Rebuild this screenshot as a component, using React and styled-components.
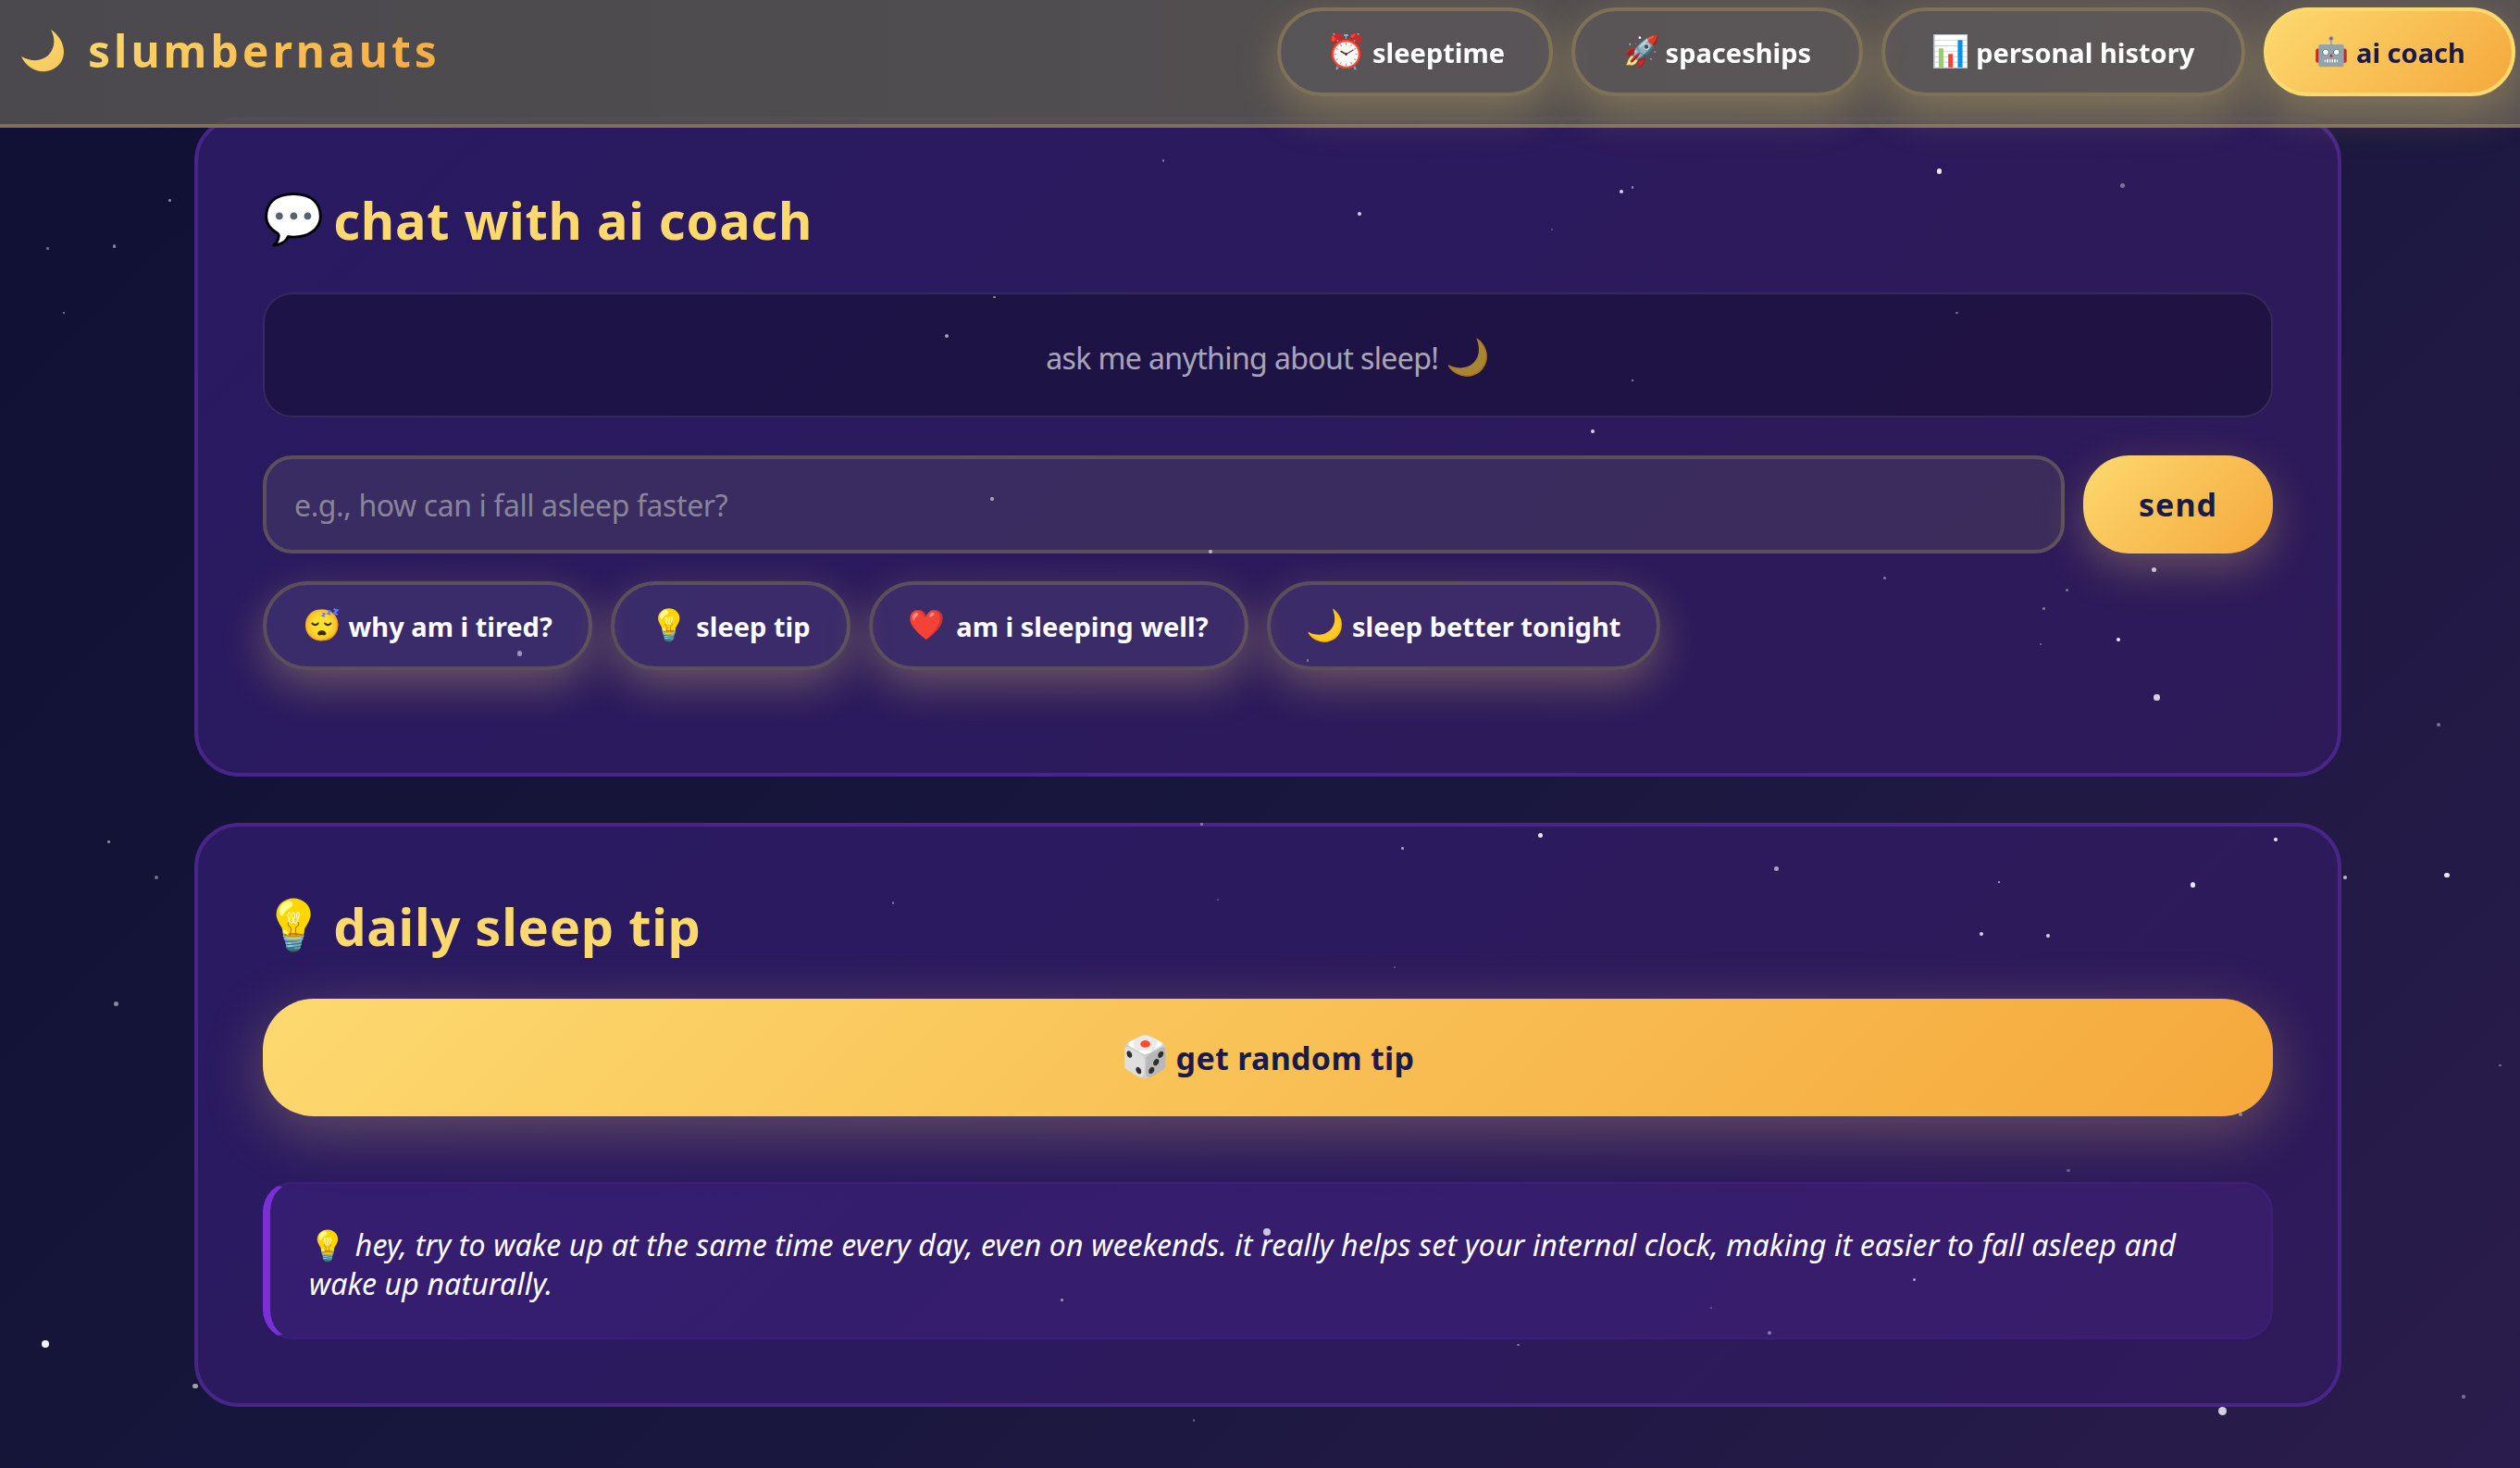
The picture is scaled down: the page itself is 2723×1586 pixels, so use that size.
import * as React from 'react'
import styled, { createGlobalStyle } from 'styled-components'

const GlobalStyle = createGlobalStyle`
  html, body {
    margin: 0;
    height: 100%;
    overflow: hidden;
  }
  body {
    background: linear-gradient(135deg, #0f1033 0%, #17163c 50%, #2a1c4c 100%);
    font-family: 'Noto Sans', 'Noto Color Emoji', sans-serif;
    line-height: 1.6;
    color: #fff;
  }
  * { box-sizing: border-box; }
`

const Stars = styled.div`
  position: fixed;
  inset: 0;
  z-index: 5;
  pointer-events: none;
`

const Star = styled.span.attrs((p) => ({
  style: { left: p.$x, top: p.$y, width: p.$s, height: p.$s, opacity: p.$o },
}))`
  position: absolute;
  border-radius: 50%;
  background: #fff;
`

const Nav = styled.nav`
  position: fixed;
  top: 0;
  left: 0;
  right: 0;
  z-index: 10;
  height: 138px;
  display: flex;
  justify-content: space-between;
  padding: 8px 5px 0 23px;
  background: linear-gradient(90deg, rgba(80, 78, 80, 0.92), rgba(94, 88, 84, 0.92));
  border-bottom: 4px solid #7d7158;
`

const Logo = styled.div`
  display: flex;
  align-items: center;
  gap: 24px;
  height: 94px;
  font-size: 48px;
  font-weight: 700;
  letter-spacing: 4px;
`

const LogoText = styled.span`
  background: linear-gradient(135deg, #fcd96f, #f5a83c);
  -webkit-background-clip: text;
  background-clip: text;
  color: transparent;
`

const NavLinks = styled.div`
  display: flex;
  gap: 20px;
`

const NavButton = styled.button`
  display: flex;
  align-items: center;
  justify-content: center;
  height: 96px;
  width: ${(p) => p.$w}px;
  padding: 0;
  border-radius: 48px;
  border: 4px solid ${(p) => (p.$active ? '#fcd96f' : '#7d7158')};
  background: ${(p) =>
    p.$active ? 'linear-gradient(135deg, #fcd96f, #f5a83c)' : 'rgba(255, 255, 255, 0.04)'};
  color: ${(p) => (p.$active ? '#1a1a4b' : '#fff')};
  font: 700 29px 'Noto Sans', 'Noto Color Emoji', sans-serif;
  box-shadow: 0 16px 48px rgba(252, 217, 111, 0.28);
  white-space: nowrap;
`

const Emoji = styled.span`
  font-family: 'Noto Color Emoji', sans-serif;
  font-style: normal;
  font-weight: 400;
  line-height: 1;
  letter-spacing: 0;
  font-size: ${(p) => p.$size || 1}em;
  margin-right: ${(p) => p.$gap ?? 8}px;
`

const Main = styled.main`
  width: 2320px;
  margin-left: 210px;
  padding-top: 126px;
  display: flex;
  flex-direction: column;
  gap: 50px;
`

const Card = styled.section`
  border: 4px solid #4a2589;
  border-radius: 48px;
  padding: 64px 70px 69px;
  background: linear-gradient(135deg, rgba(45, 27, 105, 0.85), rgba(48, 26, 92, 0.85));
`

const Title = styled.h2`
  display: flex;
  align-items: center;
  height: 88px;
  margin: 0 0 34px;
  font-size: 56px;
  font-weight: 700;
  letter-spacing: 0.7px;
  line-height: 1.6;
  color: #fcd96f;
`

const ChatBox = styled.div`
  height: 135px;
  display: flex;
  align-items: center;
  justify-content: center;
  padding-top: 7px;
  margin-bottom: 41px;
  border: 2px solid rgba(255, 255, 255, 0.1);
  border-radius: 32px;
  background: rgba(15, 10, 40, 0.45);
`

const ChatHint = styled.span`
  font-size: 32px;
  letter-spacing: -0.6px;
  opacity: 0.62;
`

const InputRow = styled.div`
  display: flex;
  gap: 20px;
  margin-bottom: 30px;
`

const Input = styled.input`
  flex: 1;
  height: 106px;
  padding: 0 30px;
  border: 4px solid #5c4f5c;
  border-radius: 32px;
  background: rgba(210, 230, 120, 0.09);
  font: 400 32px 'Noto Sans', sans-serif;
  letter-spacing: -0.4px;
  color: #fff;
  &::placeholder { color: #8a8499; }
`

const SendButton = styled.button`
  width: 205px;
  height: 106px;
  border: 0;
  border-radius: 50px;
  background: linear-gradient(135deg, #fcd96f, #f5a83c);
  color: #1a1a4b;
  font: 700 34px 'Noto Sans', sans-serif;
  letter-spacing: 1px;
  box-shadow: 0 16px 48px rgba(252, 217, 111, 0.28);
`

const Pills = styled.div`
  display: flex;
  gap: 20px;
  margin-bottom: 42px;
`

const Pill = styled.button`
  display: flex;
  align-items: center;
  height: 96px;
  padding: 0 39px;
  border: 4px solid #5c4f5c;
  border-radius: 48px;
  background: rgba(255, 255, 255, 0.08);
  color: #fff;
  font: 700 29px 'Noto Sans', 'Noto Color Emoji', sans-serif;
  box-shadow: 0 16px 48px rgba(252, 217, 111, 0.3);
  white-space: nowrap;
`

const TipButton = styled.button`
  display: flex;
  align-items: center;
  justify-content: center;
  width: 100%;
  height: 127px;
  margin-bottom: 71px;
  border: 0;
  border-radius: 55px;
  background: linear-gradient(135deg, #fcd96f, #f5a83c);
  color: #1a1a4b;
  font: 700 34px 'Noto Sans', 'Noto Color Emoji', sans-serif;
  letter-spacing: 0.3px;
  box-shadow: 0 16px 64px rgba(252, 217, 111, 0.28);
`

const TipBox = styled.div`
  height: 170px;
  padding: 45px 60px 0 42px;
  border: 2px solid rgba(123, 47, 214, 0.12);
  border-left: 8px solid #7b2fd6;
  border-radius: 32px;
  background: rgba(123, 47, 214, 0.14);
  font-size: 32px;
  font-style: italic;
  letter-spacing: 0.15px;
  line-height: 42px;
`

const MoonIcon = () => (
  <svg width="48" height="46" viewBox="0 0 48 46">
    <defs>
      <linearGradient id="moon" x1="0" y1="0" x2="1" y2="1">
        <stop offset="0" stopColor="#fcd96f" />
        <stop offset="1" stopColor="#f8c85c" />
      </linearGradient>
    </defs>
    <path
      fill="url(#moon)"
      d="M32 0C44 8 50 23 43 35C34 49 10 50 0 29C12 36 26 34 32 24C37 16 36 8 32 0Z"
    />
  </svg>
)

const starData = [
  [105, 124, 2, 0.5], [29, 154, 2, 0.4], [70, 152, 3, 0.5], [39, 194, 2, 0.5], [845, 132, 3, 0.8],
  [1008, 118, 3, 0.8], [1015, 116, 2, 0.5], [1205, 105, 4, 0.9], [1319, 114, 4, 0.4], [723, 99, 2, 0.4],
  [965, 142, 2, 0.3], [1217, 194, 2, 0.4], [618, 184, 2, 0.5], [588, 208, 3, 0.6], [1015, 236, 2, 0.6],
  [990, 267, 3, 0.8], [616, 309, 3, 0.6], [752, 342, 3, 0.6], [1172, 359, 2, 0.4], [1339, 353, 4, 0.7],
  [1285, 366, 3, 0.4], [1271, 378, 2, 0.4], [1317, 397, 3, 0.9], [1269, 400, 2, 0.4], [1340, 432, 5, 0.8],
  [1516, 450, 3, 0.4], [322, 405, 4, 0.5], [957, 518, 4, 0.9], [872, 527, 2, 0.6], [1104, 539, 4, 0.6],
  [1243, 548, 2, 0.7], [1363, 549, 4, 0.9], [1415, 521, 3, 0.9], [1458, 545, 3, 0.7], [1521, 543, 4, 0.9],
  [1232, 580, 3, 0.8], [1273, 581, 3, 0.8], [747, 512, 2, 0.4], [555, 561, 2, 0.4], [757, 559, 2, 0.3],
  [867, 601, 2, 0.3], [67, 523, 2, 0.5], [96, 545, 3, 0.4], [71, 623, 4, 0.5], [1555, 662, 2, 0.4],
  [1393, 692, 3, 0.4], [1286, 727, 3, 0.3], [786, 764, 6, 0.75], [1190, 795, 3, 0.6], [660, 808, 2, 0.5],
  [1064, 813, 2, 0.3], [1100, 828, 3, 0.4], [944, 836, 2, 0.4], [26, 834, 6, 0.95], [120, 861, 4, 0.6],
  [1380, 875, 7, 0.8], [1532, 868, 3, 0.4], [742, 883, 2, 0.3], [813, 410, 2, 0.4],
]

export default function App() {
  return (
    <>
      <GlobalStyle />
      <Nav>
        <Logo>
          <MoonIcon />
          <LogoText>slumbernauts</LogoText>
        </Logo>
        <NavLinks>
          <NavButton $w={298}><Emoji $size={1.25} $gap={6}>⏰</Emoji>sleeptime</NavButton>
          <NavButton $w={315}><Emoji $size={1.1} $gap={6}>🚀</Emoji>spaceships</NavButton>
          <NavButton $w={393}><Emoji $size={1.15} $gap={6}>📊</Emoji>personal history</NavButton>
          <NavButton $w={272} $active><Emoji $size={1.05} $gap={8}>🤖</Emoji>ai coach</NavButton>
        </NavLinks>
      </Nav>
      <Main>
        <Card>
          <Title><Emoji $gap={10} $size={0.95}>💬</Emoji>chat with ai coach</Title>
          <ChatBox>
            <ChatHint>ask me anything about sleep!&nbsp;<Emoji $size={1.2} $gap={0}>🌙</Emoji></ChatHint>
          </ChatBox>
          <InputRow>
            <Input placeholder="e.g., how can i fall asleep faster?" />
            <SendButton>send</SendButton>
          </InputRow>
          <Pills>
            <Pill><Emoji $gap={8} $size={1.15}>😴</Emoji>why am i tired?</Pill>
            <Pill><Emoji $gap={8} $size={1.15}>💡</Emoji>sleep tip</Pill>
            <Pill><Emoji $gap={12} $size={1.1}>❤️</Emoji>am i sleeping well?</Pill>
            <Pill><Emoji $gap={8} $size={1.15}>🌙</Emoji>sleep better tonight</Pill>
          </Pills>
        </Card>
        <Card>
          <Title><Emoji $gap={10} $size={0.95}>💡</Emoji>daily sleep tip</Title>
          <TipButton><Emoji $size={1.25} $gap={6}>🎲</Emoji>get random tip</TipButton>
          <TipBox>
            <Emoji $gap={10}>💡</Emoji>
            <span>hey, try to wake up at the same time every day, even on weekends. it really helps set your internal clock, making it easier to fall asleep and</span>
            <br />
            <span>wake up naturally.</span>
          </TipBox>
        </Card>
      </Main>
      <Stars>
        {starData.map(([x, y, s, o], i) => (
          <Star key={i} $x={x * 1.7366} $y={y * 1.7366} $s={s * 1.3} $o={o} />
        ))}
      </Stars>
    </>
  )
}
